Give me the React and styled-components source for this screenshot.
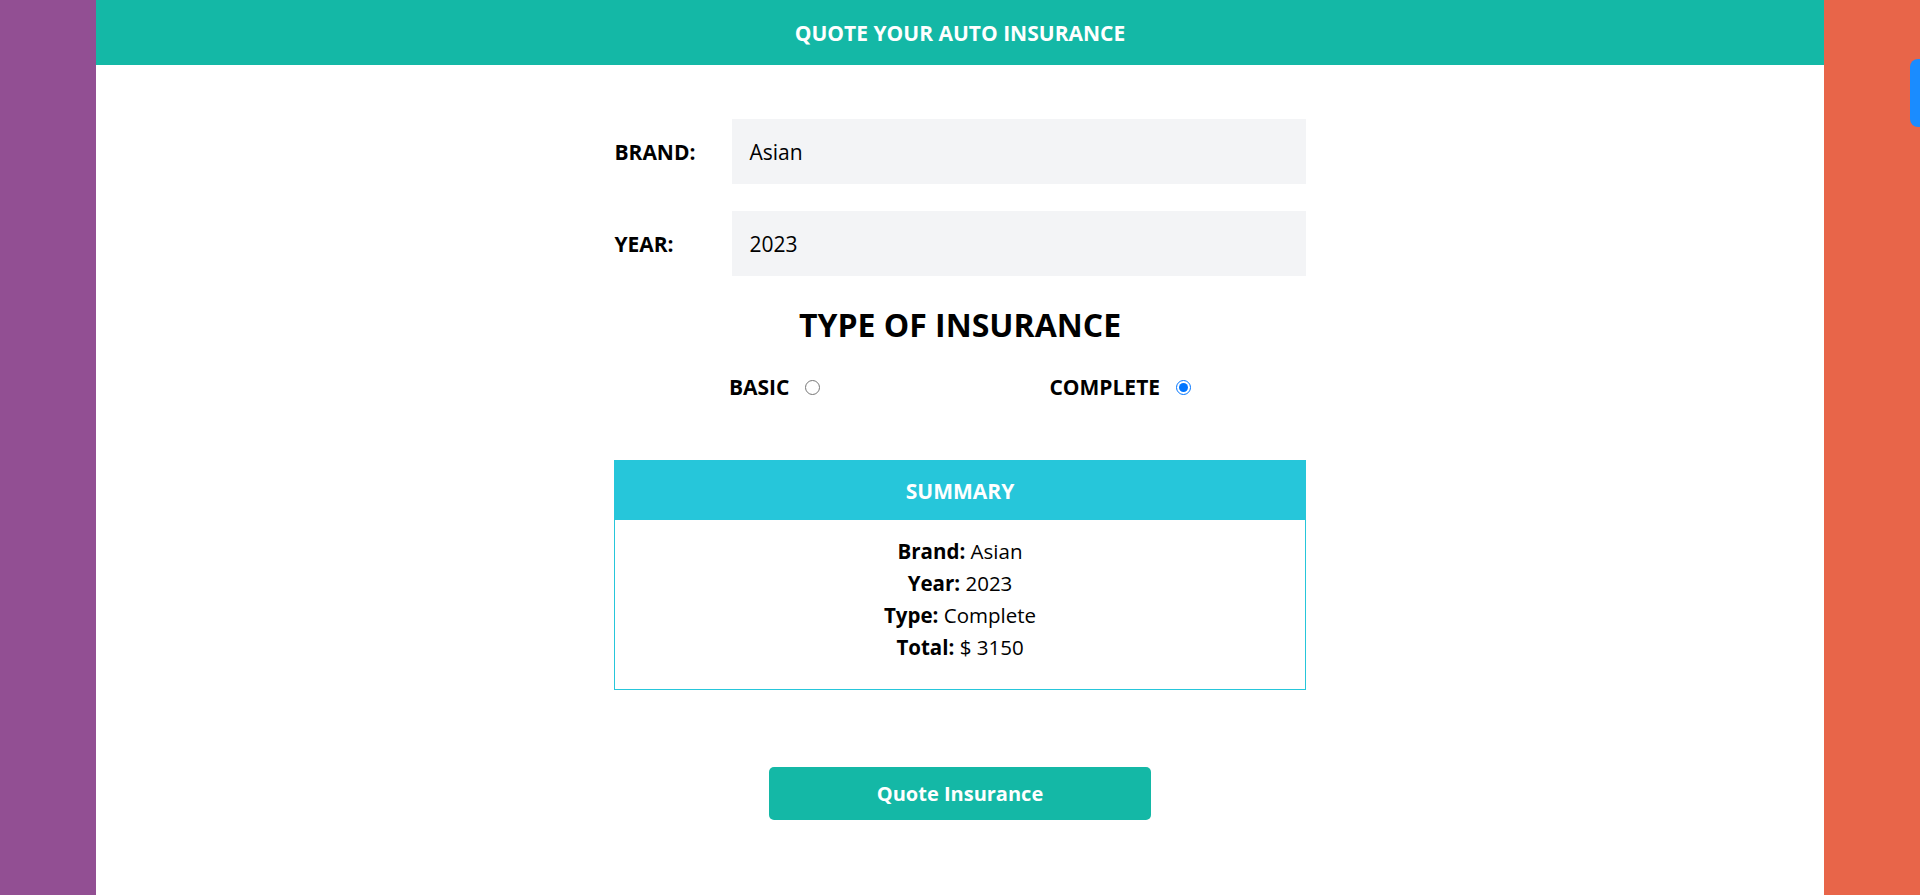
import React, { useState } from "react";
import styled, { createGlobalStyle } from "styled-components";

const GlobalStyle = createGlobalStyle`
  * { box-sizing: border-box; }
  body {
    margin: 0;
    font-family: "Open Sans", "Noto Sans", sans-serif;
    color: #000;
    background: linear-gradient(to right, #924f93 50%, #e86549 50%);
  }
`;

const Page = styled.div`
  width: 90%;
  min-height: 100vh;
  margin: 0 auto;
  background: #fff;
`;

const Header = styled.header`
  height: 65px;
  background: #14b8a6;
  display: flex;
  align-items: center;
  justify-content: center;
`;

const Title = styled.h1`
  margin: 0;
  font-size: 21px;
  font-weight: 700;
  color: #fff;
  text-transform: uppercase;
`;

const Form = styled.form`
  width: 40%;
  margin: 0 auto;
  padding-top: 54px;
  display: flex;
  flex-direction: column;
`;

const Row = styled.div`
  display: flex;
  align-items: center;
  margin-bottom: ${(p) => p.gap || 0}px;
`;

const Label = styled.label`
  flex: 0 0 118px;
  font-size: 21px;
  font-weight: 700;
  text-transform: uppercase;
`;

const Select = styled.div`
  flex: 1;
  height: 65px;
  background: #f3f4f6;
  padding: 0 17px;
  display: flex;
  align-items: center;
  font-size: 21px;
`;

const Heading = styled.h2`
  margin: 29px 0 0;
  text-align: center;
  font-size: 32px;
  line-height: 40px;
  font-weight: 700;
  text-transform: uppercase;
`;

const Options = styled.div`
  margin-top: 30px;
  display: flex;
  justify-content: space-around;
`;

const Option = styled.label`
  display: flex;
  align-items: center;
  font-size: 21px;
  line-height: 24px;
  font-weight: 700;
  text-transform: uppercase;
  cursor: pointer;

  input {
    width: 15px;
    height: 15px;
    margin: 0 0 0 16px;
  }
`;

const Summary = styled.div`
  margin-top: 61px;
  border: 1px solid #26c6da;
`;

const SummaryHead = styled.h3`
  margin: 0;
  height: 59px;
  background: #26c6da;
  color: #fff;
  display: flex;
  align-items: center;
  justify-content: center;
  font-size: 21px;
  font-weight: 700;
  text-transform: uppercase;
`;

const SummaryBody = styled.div`
  padding: 15px 0 26px;
  text-align: center;
  font-size: 20.5px;
  line-height: 32px;

  p { margin: 0; }
  span { font-weight: 700; }
`;

const Button = styled.button`
  align-self: center;
  margin-top: 77px;
  width: 382px;
  height: 53px;
  border: none;
  border-radius: 5px;
  background: #14b8a6;
  color: #fff;
  font-family: inherit;
  font-size: 20px;
  font-weight: 700;
  cursor: pointer;
`;

const SideTab = styled.div`
  position: fixed;
  top: 59px;
  right: 0;
  width: 10px;
  height: 68px;
  background: #1a8cff;
  border-radius: 8px 0 0 8px;
`;

export default function App() {
  const [plan, setPlan] = useState("complete");
  const data = { brand: "Asian", year: "2023", total: 3150 };

  return (
    <>
      <GlobalStyle />
      <Page>
        <Header>
          <Title>Quote your Auto Insurance</Title>
        </Header>
        <Form onSubmit={(e) => e.preventDefault()}>
          <Row gap={27}>
            <Label>Brand:</Label>
            <Select>{data.brand}</Select>
          </Row>
          <Row>
            <Label>Year:</Label>
            <Select>{data.year}</Select>
          </Row>
          <Heading>Type of Insurance</Heading>
          <Options>
            <Option>
              Basic
              <input
                type="radio"
                name="plan"
                checked={plan === "basic"}
                onChange={() => setPlan("basic")}
              />
            </Option>
            <Option>
              Complete
              <input
                type="radio"
                name="plan"
                checked={plan === "complete"}
                onChange={() => setPlan("complete")}
              />
            </Option>
          </Options>
          <Summary>
            <SummaryHead>Summary</SummaryHead>
            <SummaryBody>
              <p><span>Brand:</span> {data.brand}</p>
              <p><span>Year:</span> {data.year}</p>
              <p><span>Type:</span> {plan === "complete" ? "Complete" : "Basic"}</p>
              <p><span>Total:</span> $ {data.total}</p>
            </SummaryBody>
          </Summary>
          <Button type="submit">Quote Insurance</Button>
        </Form>
      </Page>
      <SideTab />
    </>
  );
}
